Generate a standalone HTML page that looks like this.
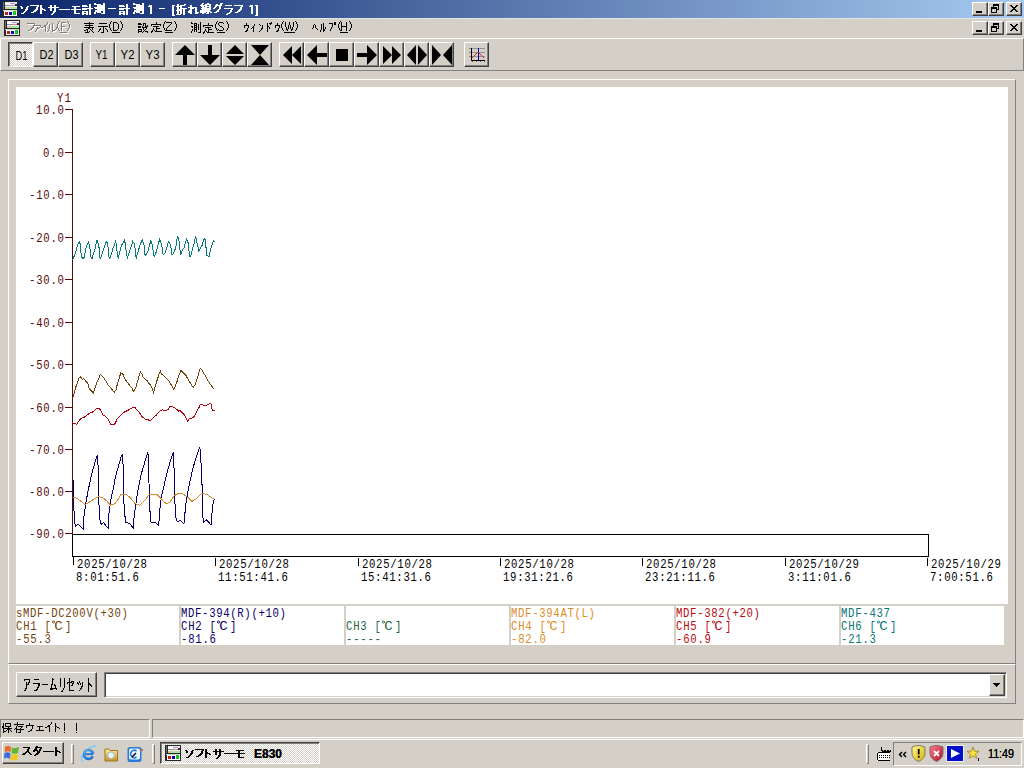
<!DOCTYPE html>
<html><head><meta charset="utf-8"><title>ソフトサーモ計測</title><style>
*{margin:0;padding:0;box-sizing:border-box}
html,body{width:1024px;height:768px;overflow:hidden;background:#d4d0c8;font-family:"Liberation Sans",sans-serif;font-size:12px;color:#000}
.a{position:absolute}
.jp{position:absolute;display:block}
.raised{position:absolute;background:#d4d0c8;border-top:1px solid #fff;border-left:1px solid #fff;border-right:1px solid #404040;border-bottom:1px solid #404040;box-shadow:inset -1px -1px 0 #808080}
.pressed{position:absolute;border-top:1px solid #404040;border-left:1px solid #404040;border-right:1px solid #fff;border-bottom:1px solid #fff;box-shadow:inset 1px 1px 0 #808080;
  background-color:#fff;background-image:repeating-conic-gradient(#d4d0c8 0 25%,#fff 0 50%);background-size:2px 2px}
.thin-raised{position:absolute;border-top:1px solid #fff;border-left:1px solid #fff;border-right:1px solid #808080;border-bottom:1px solid #808080}
.thin-sunk{position:absolute;border-top:1px solid #808080;border-left:1px solid #808080;border-right:1px solid #fff;border-bottom:1px solid #fff}
.tb{font-family:"Liberation Sans",sans-serif;font-size:12px;text-align:center;line-height:23px}
svg.a{overflow:visible}
.mono{font-family:"Liberation Mono",monospace}
</style></head>
<body>
<div class="a" style="left:0;top:0;width:1024px;height:18px;background:linear-gradient(90deg,#0a246a,#a6caf0)"></div>
<div class="a" style="left:0;top:18px;width:1024px;height:1px;background:#e4e4e8"></div>
<svg class="a" style="left:2px;top:1px" width="16" height="16" shape-rendering="crispEdges">
<rect x="0" y="0" width="16" height="16" fill="#262626"/>
<rect x="3" y="1" width="12" height="7" fill="#eef0ee"/>
<rect x="3" y="2" width="5" height="2" fill="#fff"/>
<rect x="8" y="2" width="5" height="1" fill="#a898d8"/>
<rect x="3" y="4" width="5" height="1" fill="#8c8cc8"/>
<rect x="8" y="4" width="5" height="1" fill="#d09088"/>
<rect x="3" y="6" width="5" height="2" fill="#c8d098"/>
<rect x="8" y="6" width="7" height="2" fill="#a8e8a8"/>
<rect x="13" y="3" width="2" height="2" fill="#3a1a50"/>
<rect x="1" y="1" width="1" height="7" fill="#707070"/>
<rect x="1" y="9" width="14" height="1" fill="#d8d8d8"/>
<rect x="2" y="10" width="13" height="5" fill="#fff"/>
<rect x="3" y="11" width="3" height="3" fill="#c81818"/>
<rect x="7" y="11" width="3" height="3" fill="#0808b8"/>
<rect x="11" y="10" width="3" height="4" fill="#18c818"/>
</svg>
<svg class="jp" style="left:20px;top:3px" width="85" height="12" shape-rendering="crispEdges"><title>ソフトサーモ計測</title><path fill="#fff" d="M74 0h2v1h-2zM83 0h2v1h-2zM69 1h2v1h-2zM74 1h7v1h-7zM83 1h2v1h-2zM10 2h9v1h-9zM20 2h2v1h-2zM30 2h2v1h-2zM34 2h2v1h-2zM62 2h5v1h-5zM69 2h2v1h-2zM77 2h8v1h-8zM0 3h2v1h-2zM7 3h2v1h-2zM17 3h2v1h-2zM20 3h2v1h-2zM30 3h2v1h-2zM34 3h2v1h-2zM52 3h8v1h-8zM62 3h6v1h-6zM69 3h2v1h-2zM77 3h8v1h-8zM1 4h2v1h-2zM6 4h2v1h-2zM16 4h2v1h-2zM20 4h2v1h-2zM28 4h11v1h-11zM54 4h2v1h-2zM69 4h2v1h-2zM74 4h11v1h-11zM1 5h2v1h-2zM6 5h2v1h-2zM16 5h2v1h-2zM20 5h3v1h-3zM30 5h2v1h-2zM34 5h2v1h-2zM54 5h2v1h-2zM62 5h11v1h-11zM75 5h10v1h-10zM5 6h3v1h-3zM15 6h3v1h-3zM20 6h5v1h-5zM30 6h2v1h-2zM34 6h2v1h-2zM39 6h11v1h-11zM51 6h10v1h-10zM62 6h5v1h-5zM69 6h2v1h-2zM77 6h8v1h-8zM5 7h2v1h-2zM14 7h3v1h-3zM20 7h2v1h-2zM24 7h2v1h-2zM30 7h2v1h-2zM34 7h2v1h-2zM54 7h2v1h-2zM69 7h2v1h-2zM75 7h10v1h-10zM4 8h2v1h-2zM13 8h3v1h-3zM20 8h2v1h-2zM33 8h3v1h-3zM54 8h2v1h-2zM62 8h6v1h-6zM69 8h2v1h-2zM75 8h6v1h-6zM83 8h2v1h-2zM3 9h2v1h-2zM11 9h3v1h-3zM20 9h2v1h-2zM33 9h2v1h-2zM54 9h2v1h-2zM62 9h2v1h-2zM66 9h2v1h-2zM69 9h2v1h-2zM74 9h2v1h-2zM77 9h4v1h-4zM83 9h2v1h-2zM1 10h3v1h-3zM20 10h2v1h-2zM32 10h2v1h-2zM54 10h6v1h-6zM62 10h6v1h-6zM69 10h2v1h-2zM74 10h2v1h-2zM81 10h4v1h-4zM31 11h2v1h-2zM62 11h2v1h-2zM66 11h2v1h-2zM69 11h2v1h-2z"/></svg>
<div class="a" style="left:108px;top:8px;width:8px;height:1px;background:#fff"></div>
<svg class="jp" style="left:119px;top:3px" width="33" height="12" shape-rendering="crispEdges"><title>計測1</title><path fill="#fff" d="M14 0h2v1h-2zM23 0h2v1h-2zM7 1h2v1h-2zM14 1h7v1h-7zM23 1h2v1h-2zM0 2h5v1h-5zM7 2h2v1h-2zM17 2h8v1h-8zM30 2h3v1h-3zM0 3h6v1h-6zM7 3h2v1h-2zM17 3h8v1h-8zM29 3h4v1h-4zM7 4h2v1h-2zM14 4h11v1h-11zM31 4h2v1h-2zM0 5h11v1h-11zM15 5h10v1h-10zM31 5h2v1h-2zM0 6h5v1h-5zM7 6h2v1h-2zM17 6h8v1h-8zM31 6h2v1h-2zM7 7h2v1h-2zM15 7h10v1h-10zM31 7h2v1h-2zM0 8h6v1h-6zM7 8h2v1h-2zM15 8h6v1h-6zM23 8h2v1h-2zM31 8h2v1h-2zM0 9h2v1h-2zM4 9h2v1h-2zM7 9h2v1h-2zM14 9h2v1h-2zM17 9h4v1h-4zM23 9h2v1h-2zM31 9h2v1h-2zM0 10h6v1h-6zM7 10h2v1h-2zM14 10h2v1h-2zM21 10h4v1h-4zM31 10h2v1h-2zM0 11h2v1h-2zM4 11h2v1h-2zM7 11h2v1h-2z"/></svg>
<div class="a" style="left:159px;top:8px;width:6px;height:1px;background:#fff"></div>
<svg class="jp" style="left:172px;top:3px" width="86" height="13" shape-rendering="crispEdges"><title>[折れ線グラフ 1]</title><path fill="#fff" d="M30 0h2v1h-2zM35 0h2v1h-2zM48 0h3v1h-3zM5 1h2v1h-2zM12 1h2v1h-2zM29 1h2v1h-2zM33 1h6v1h-6zM44 1h2v1h-2zM48 1h2v1h-2zM0 2h3v1h-3zM5 2h2v1h-2zM8 2h5v1h-5zM18 2h2v1h-2zM28 2h7v1h-7zM37 2h2v1h-2zM43 2h7v1h-7zM53 2h7v1h-7zM62 2h9v1h-9zM78 2h3v1h-3zM83 2h3v1h-3zM0 3h2v1h-2zM4 3h6v1h-6zM18 3h2v1h-2zM29 3h3v1h-3zM33 3h6v1h-6zM43 3h2v1h-2zM47 3h2v1h-2zM69 3h2v1h-2zM77 3h4v1h-4zM84 3h2v1h-2zM0 4h2v1h-2zM5 4h2v1h-2zM8 4h2v1h-2zM16 4h9v1h-9zM30 4h5v1h-5zM37 4h2v1h-2zM42 4h2v1h-2zM47 4h2v1h-2zM68 4h2v1h-2zM79 4h2v1h-2zM84 4h2v1h-2zM0 5h2v1h-2zM5 5h2v1h-2zM8 5h7v1h-7zM18 5h4v1h-4zM23 5h2v1h-2zM29 5h10v1h-10zM41 5h2v1h-2zM47 5h2v1h-2zM52 5h9v1h-9zM68 5h2v1h-2zM79 5h2v1h-2zM84 5h2v1h-2zM0 6h2v1h-2zM5 6h5v1h-5zM11 6h2v1h-2zM18 6h2v1h-2zM23 6h2v1h-2zM30 6h9v1h-9zM46 6h2v1h-2zM59 6h2v1h-2zM67 6h3v1h-3zM79 6h2v1h-2zM84 6h2v1h-2zM0 7h2v1h-2zM4 7h6v1h-6zM11 7h2v1h-2zM17 7h3v1h-3zM23 7h2v1h-2zM28 7h10v1h-10zM45 7h2v1h-2zM58 7h2v1h-2zM66 7h3v1h-3zM79 7h2v1h-2zM84 7h2v1h-2zM0 8h2v1h-2zM5 8h2v1h-2zM8 8h2v1h-2zM11 8h2v1h-2zM16 8h4v1h-4zM23 8h2v1h-2zM28 8h11v1h-11zM44 8h3v1h-3zM58 8h2v1h-2zM65 8h3v1h-3zM79 8h2v1h-2zM84 8h2v1h-2zM0 9h2v1h-2zM5 9h2v1h-2zM8 9h2v1h-2zM11 9h2v1h-2zM16 9h4v1h-4zM23 9h4v1h-4zM28 9h6v1h-6zM35 9h2v1h-2zM38 9h2v1h-2zM42 9h3v1h-3zM57 9h2v1h-2zM63 9h3v1h-3zM79 9h2v1h-2zM84 9h2v1h-2zM0 10h2v1h-2zM5 10h2v1h-2zM8 10h2v1h-2zM11 10h2v1h-2zM18 10h2v1h-2zM23 10h3v1h-3zM30 10h2v1h-2zM34 10h3v1h-3zM55 10h3v1h-3zM79 10h2v1h-2zM84 10h2v1h-2zM0 11h2v1h-2zM4 11h5v1h-5zM11 11h2v1h-2zM54 11h2v1h-2zM84 11h2v1h-2zM0 12h3v1h-3zM83 12h3v1h-3z"/></svg>
<div class="raised" style="left:972px;top:2px;width:16px;height:14px"></div>
<div class="raised" style="left:988px;top:2px;width:16px;height:14px"></div>
<div class="raised" style="left:1006px;top:2px;width:16px;height:14px"></div>
<svg class="a" style="left:0;top:0" width="1024" height="40" shape-rendering="crispEdges" fill="#000"><rect x="976" y="11" width="6" height="2"/><rect x="993" y="4" width="6" height="2"/><rect x="998" y="4" width="1" height="6"/><rect x="993" y="4" width="1" height="3"/><rect x="996" y="9" width="3" height="1"/><rect x="991" y="7" width="6" height="2"/><rect x="991" y="7" width="1" height="6"/><rect x="996" y="7" width="1" height="6"/><rect x="991" y="12" width="6" height="1"/><rect x="1010" y="5" width="1" height="1"/><rect x="1011" y="5" width="1" height="1"/><rect x="1016" y="5" width="1" height="1"/><rect x="1017" y="5" width="1" height="1"/><rect x="1011" y="6" width="1" height="1"/><rect x="1012" y="6" width="1" height="1"/><rect x="1015" y="6" width="1" height="1"/><rect x="1016" y="6" width="1" height="1"/><rect x="1012" y="7" width="1" height="1"/><rect x="1013" y="7" width="1" height="1"/><rect x="1014" y="7" width="1" height="1"/><rect x="1015" y="7" width="1" height="1"/><rect x="1013" y="8" width="1" height="1"/><rect x="1014" y="8" width="1" height="1"/><rect x="1012" y="9" width="1" height="1"/><rect x="1013" y="9" width="1" height="1"/><rect x="1014" y="9" width="1" height="1"/><rect x="1015" y="9" width="1" height="1"/><rect x="1011" y="10" width="1" height="1"/><rect x="1012" y="10" width="1" height="1"/><rect x="1015" y="10" width="1" height="1"/><rect x="1016" y="10" width="1" height="1"/><rect x="1010" y="11" width="1" height="1"/><rect x="1011" y="11" width="1" height="1"/><rect x="1016" y="11" width="1" height="1"/><rect x="1017" y="11" width="1" height="1"/></svg>
<svg class="a" style="left:4px;top:20px" width="16" height="16" shape-rendering="crispEdges">
<rect x="0" y="0" width="16" height="16" fill="#262626"/>
<rect x="3" y="1" width="12" height="7" fill="#eef0ee"/>
<rect x="3" y="2" width="5" height="2" fill="#fff"/>
<rect x="8" y="2" width="5" height="1" fill="#a898d8"/>
<rect x="3" y="4" width="5" height="1" fill="#8c8cc8"/>
<rect x="8" y="4" width="5" height="1" fill="#d09088"/>
<rect x="3" y="6" width="5" height="2" fill="#c8d098"/>
<rect x="8" y="6" width="7" height="2" fill="#a8e8a8"/>
<rect x="13" y="3" width="2" height="2" fill="#3a1a50"/>
<rect x="1" y="1" width="1" height="7" fill="#707070"/>
<rect x="1" y="9" width="14" height="1" fill="#d8d8d8"/>
<rect x="2" y="10" width="13" height="5" fill="#fff"/>
<rect x="3" y="11" width="3" height="3" fill="#c81818"/>
<rect x="7" y="11" width="3" height="3" fill="#0808b8"/>
<rect x="11" y="10" width="3" height="4" fill="#18c818"/>
</svg>
<svg class="jp" style="left:27px;top:22px" width="31" height="11" shape-rendering="crispEdges"><title>ファイル</title><path fill="#fff" d="M21 1h1v1h-1zM1 2h8v1h-8zM21 2h1v1h-1zM26 2h1v1h-1zM8 3h1v1h-1zM20 3h1v1h-1zM23 3h1v1h-1zM26 3h1v1h-1zM7 4h8v1h-8zM18 4h2v1h-2zM23 4h1v1h-1zM26 4h1v1h-1zM7 5h1v1h-1zM14 5h1v1h-1zM17 5h3v1h-3zM23 5h1v1h-1zM26 5h1v1h-1zM6 6h2v1h-2zM11 6h1v1h-1zM13 6h1v1h-1zM15 6h2v1h-2zM19 6h1v1h-1zM23 6h1v1h-1zM26 6h1v1h-1zM30 6h1v1h-1zM5 7h2v1h-2zM11 7h2v1h-2zM19 7h1v1h-1zM23 7h1v1h-1zM26 7h1v1h-1zM30 7h1v1h-1zM4 8h2v1h-2zM10 8h1v1h-1zM19 8h1v1h-1zM22 8h1v1h-1zM26 8h1v1h-1zM29 8h1v1h-1zM2 9h2v1h-2zM10 9h1v1h-1zM19 9h1v1h-1zM22 9h1v1h-1zM26 9h3v1h-3zM9 10h1v1h-1zM19 10h1v1h-1zM21 10h1v1h-1zM26 10h1v1h-1z"/><path fill="#808080" d="M20 0h1v1h-1zM0 1h8v1h-8zM20 1h1v1h-1zM25 1h1v1h-1zM7 2h1v1h-1zM19 2h1v1h-1zM22 2h1v1h-1zM25 2h1v1h-1zM6 3h8v1h-8zM17 3h2v1h-2zM22 3h1v1h-1zM25 3h1v1h-1zM6 4h1v1h-1zM13 4h1v1h-1zM16 4h3v1h-3zM22 4h1v1h-1zM25 4h1v1h-1zM5 5h2v1h-2zM10 5h1v1h-1zM12 5h1v1h-1zM14 5h2v1h-2zM18 5h1v1h-1zM22 5h1v1h-1zM25 5h1v1h-1zM29 5h1v1h-1zM4 6h2v1h-2zM10 6h2v1h-2zM18 6h1v1h-1zM22 6h1v1h-1zM25 6h1v1h-1zM29 6h1v1h-1zM3 7h2v1h-2zM9 7h1v1h-1zM18 7h1v1h-1zM21 7h1v1h-1zM25 7h1v1h-1zM28 7h1v1h-1zM1 8h2v1h-2zM9 8h1v1h-1zM18 8h1v1h-1zM21 8h1v1h-1zM25 8h3v1h-3zM8 9h1v1h-1zM18 9h1v1h-1zM20 9h1v1h-1zM25 9h1v1h-1z"/></svg>
<svg class="a" style="left:0;top:0" width="400" height="40" shape-rendering="crispEdges"><path fill="#fff" transform="translate(1 1)" d="M59 21h1v1h-1zM58 22h1v1h-1zM58 23h1v1h-1zM57 24h1v1h-1zM57 25h1v1h-1zM57 26h1v1h-1zM57 27h1v1h-1zM58 28h1v1h-1zM58 29h1v1h-1zM59 30h1v1h-1zM61 22h5v1h-5zM61 23h1v1h-1zM61 24h1v1h-1zM61 25h1v1h-1zM61 26h4v1h-4zM61 27h1v1h-1zM61 28h1v1h-1zM61 29h1v1h-1zM61 30h1v1h-1zM67 21h1v1h-1zM68 22h1v1h-1zM68 23h1v1h-1zM69 24h1v1h-1zM69 25h1v1h-1zM69 26h1v1h-1zM69 27h1v1h-1zM68 28h1v1h-1zM68 29h1v1h-1zM67 30h1v1h-1zM60 32h7v1h-7z"/><path fill="#808080" d="M59 21h1v1h-1zM58 22h1v1h-1zM58 23h1v1h-1zM57 24h1v1h-1zM57 25h1v1h-1zM57 26h1v1h-1zM57 27h1v1h-1zM58 28h1v1h-1zM58 29h1v1h-1zM59 30h1v1h-1zM61 22h5v1h-5zM61 23h1v1h-1zM61 24h1v1h-1zM61 25h1v1h-1zM61 26h4v1h-4zM61 27h1v1h-1zM61 28h1v1h-1zM61 29h1v1h-1zM61 30h1v1h-1zM67 21h1v1h-1zM68 22h1v1h-1zM68 23h1v1h-1zM69 24h1v1h-1zM69 25h1v1h-1zM69 26h1v1h-1zM69 27h1v1h-1zM68 28h1v1h-1zM68 29h1v1h-1zM67 30h1v1h-1zM60 32h7v1h-7z"/></svg>
<svg class="jp" style="left:84px;top:22px" width="24" height="11" shape-rendering="crispEdges"><title>表示</title><path fill="#000" d="M5 0h1v1h-1zM0 1h10v1h-10zM15 1h8v1h-8zM5 2h1v1h-1zM1 3h8v1h-8zM5 4h1v1h-1zM14 4h10v1h-10zM0 5h10v1h-10zM19 5h1v1h-1zM4 6h2v1h-2zM8 6h1v1h-1zM16 6h1v1h-1zM19 6h1v1h-1zM21 6h1v1h-1zM2 7h2v1h-2zM6 7h1v1h-1zM8 7h1v1h-1zM15 7h2v1h-2zM19 7h1v1h-1zM22 7h1v1h-1zM0 8h2v1h-2zM3 8h1v1h-1zM7 8h1v1h-1zM15 8h1v1h-1zM19 8h1v1h-1zM23 8h1v1h-1zM3 9h1v1h-1zM5 9h1v1h-1zM8 9h1v1h-1zM14 9h1v1h-1zM19 9h1v1h-1zM23 9h1v1h-1zM1 10h4v1h-4zM9 10h1v1h-1zM17 10h3v1h-3z"/></svg>
<svg class="a" style="left:0;top:0" width="400" height="40" shape-rendering="crispEdges"><path fill="#000" d="M111 21h1v1h-1zM110 22h1v1h-1zM110 23h1v1h-1zM109 24h1v1h-1zM109 25h1v1h-1zM109 26h1v1h-1zM109 27h1v1h-1zM110 28h1v1h-1zM110 29h1v1h-1zM111 30h1v1h-1zM113 22h4v1h-4zM113 23h1v1h-1zM117 23h1v1h-1zM113 24h1v1h-1zM118 24h1v1h-1zM113 25h1v1h-1zM118 25h1v1h-1zM113 26h1v1h-1zM118 26h1v1h-1zM113 27h1v1h-1zM118 27h1v1h-1zM113 28h1v1h-1zM118 28h1v1h-1zM113 29h1v1h-1zM117 29h1v1h-1zM113 30h4v1h-4zM120 21h1v1h-1zM121 22h1v1h-1zM121 23h1v1h-1zM122 24h1v1h-1zM122 25h1v1h-1zM122 26h1v1h-1zM122 27h1v1h-1zM121 28h1v1h-1zM121 29h1v1h-1zM120 30h1v1h-1zM112 32h8v1h-8z"/></svg>
<svg class="jp" style="left:138px;top:22px" width="24" height="11" shape-rendering="crispEdges"><title>設定</title><path fill="#000" d="M18 0h1v1h-1zM0 1h3v1h-3zM5 1h3v1h-3zM18 1h1v1h-1zM0 2h4v1h-4zM5 2h1v1h-1zM7 2h1v1h-1zM13 2h10v1h-10zM5 3h1v1h-1zM7 3h1v1h-1zM9 3h1v1h-1zM13 3h1v1h-1zM22 3h1v1h-1zM0 4h3v1h-3zM4 4h1v1h-1zM7 4h3v1h-3zM15 4h6v1h-6zM0 5h3v1h-3zM4 5h5v1h-5zM18 5h1v1h-1zM5 6h1v1h-1zM8 6h1v1h-1zM15 6h1v1h-1zM18 6h4v1h-4zM0 7h4v1h-4zM5 7h1v1h-1zM7 7h1v1h-1zM15 7h1v1h-1zM18 7h1v1h-1zM0 8h1v1h-1zM3 8h1v1h-1zM6 8h1v1h-1zM14 8h1v1h-1zM16 8h1v1h-1zM18 8h1v1h-1zM0 9h4v1h-4zM5 9h1v1h-1zM7 9h3v1h-3zM13 9h2v1h-2zM17 9h7v1h-7zM0 10h1v1h-1zM4 10h1v1h-1zM9 10h1v1h-1zM13 10h1v1h-1z"/></svg>
<svg class="a" style="left:0;top:0" width="400" height="40" shape-rendering="crispEdges"><path fill="#000" d="M165 21h1v1h-1zM164 22h1v1h-1zM164 23h1v1h-1zM163 24h1v1h-1zM163 25h1v1h-1zM163 26h1v1h-1zM163 27h1v1h-1zM164 28h1v1h-1zM164 29h1v1h-1zM165 30h1v1h-1zM166 22h6v1h-6zM171 23h1v1h-1zM170 24h1v1h-1zM169 25h1v1h-1zM168 26h1v1h-1zM167 27h1v1h-1zM166 28h1v1h-1zM166 29h1v1h-1zM166 30h6v1h-6zM174 21h1v1h-1zM175 22h1v1h-1zM175 23h1v1h-1zM176 24h1v1h-1zM176 25h1v1h-1zM176 26h1v1h-1zM176 27h1v1h-1zM175 28h1v1h-1zM175 29h1v1h-1zM174 30h1v1h-1zM165 32h8v1h-8z"/></svg>
<svg class="jp" style="left:191px;top:22px" width="23" height="12" shape-rendering="crispEdges"><title>測定</title><path fill="#000" d="M0 0h1v1h-1zM9 0h1v1h-1zM0 1h2v1h-2zM3 1h3v1h-3zM9 1h1v1h-1zM17 1h1v1h-1zM3 2h1v1h-1zM5 2h1v1h-1zM7 2h1v1h-1zM9 2h1v1h-1zM17 2h1v1h-1zM3 3h3v1h-3zM7 3h1v1h-1zM9 3h1v1h-1zM12 3h10v1h-10zM0 4h2v1h-2zM3 4h1v1h-1zM5 4h1v1h-1zM7 4h1v1h-1zM9 4h1v1h-1zM12 4h1v1h-1zM21 4h1v1h-1zM1 5h1v1h-1zM3 5h3v1h-3zM7 5h1v1h-1zM9 5h1v1h-1zM14 5h6v1h-6zM3 6h1v1h-1zM5 6h1v1h-1zM7 6h1v1h-1zM9 6h1v1h-1zM17 6h1v1h-1zM1 7h1v1h-1zM3 7h3v1h-3zM7 7h1v1h-1zM9 7h1v1h-1zM14 7h1v1h-1zM17 7h4v1h-4zM1 8h1v1h-1zM3 8h1v1h-1zM5 8h1v1h-1zM9 8h1v1h-1zM14 8h1v1h-1zM17 8h1v1h-1zM0 9h1v1h-1zM3 9h1v1h-1zM5 9h1v1h-1zM9 9h1v1h-1zM13 9h1v1h-1zM15 9h1v1h-1zM17 9h1v1h-1zM0 10h1v1h-1zM7 10h3v1h-3zM12 10h2v1h-2zM16 10h7v1h-7zM12 11h1v1h-1z"/></svg>
<svg class="a" style="left:0;top:0" width="400" height="40" shape-rendering="crispEdges"><path fill="#000" d="M217 21h1v1h-1zM216 22h1v1h-1zM216 23h1v1h-1zM215 24h1v1h-1zM215 25h1v1h-1zM215 26h1v1h-1zM215 27h1v1h-1zM216 28h1v1h-1zM216 29h1v1h-1zM217 30h1v1h-1zM219 22h4v1h-4zM218 23h1v1h-1zM223 23h1v1h-1zM218 24h1v1h-1zM219 25h1v1h-1zM220 26h2v1h-2zM222 27h1v1h-1zM223 28h1v1h-1zM218 29h1v1h-1zM223 29h1v1h-1zM219 30h4v1h-4zM226 21h1v1h-1zM227 22h1v1h-1zM227 23h1v1h-1zM228 24h1v1h-1zM228 25h1v1h-1zM228 26h1v1h-1zM228 27h1v1h-1zM227 28h1v1h-1zM227 29h1v1h-1zM226 30h1v1h-1zM217 32h8v1h-8z"/></svg>
<svg class="jp" style="left:244px;top:22px" width="36" height="10" shape-rendering="crispEdges"><title>ｳｨﾝﾄﾞｳ</title><path fill="#000" d="M27 0h1v1h-1zM2 1h1v1h-1zM23 1h1v1h-1zM25 1h3v1h-3zM33 1h1v1h-1zM2 2h1v1h-1zM10 2h1v1h-1zM15 2h1v1h-1zM23 2h1v1h-1zM26 2h1v1h-1zM33 2h1v1h-1zM0 3h5v1h-5zM10 3h1v1h-1zM16 3h1v1h-1zM18 3h1v1h-1zM23 3h1v1h-1zM31 3h5v1h-5zM0 4h1v1h-1zM4 4h1v1h-1zM9 4h1v1h-1zM18 4h1v1h-1zM23 4h2v1h-2zM31 4h1v1h-1zM35 4h1v1h-1zM0 5h1v1h-1zM4 5h1v1h-1zM8 5h2v1h-2zM18 5h1v1h-1zM23 5h1v1h-1zM25 5h1v1h-1zM31 5h1v1h-1zM35 5h1v1h-1zM3 6h1v1h-1zM7 6h1v1h-1zM9 6h1v1h-1zM17 6h2v1h-2zM23 6h1v1h-1zM25 6h1v1h-1zM34 6h1v1h-1zM3 7h1v1h-1zM9 7h1v1h-1zM17 7h1v1h-1zM23 7h1v1h-1zM34 7h1v1h-1zM2 8h2v1h-2zM9 8h1v1h-1zM16 8h1v1h-1zM23 8h1v1h-1zM33 8h2v1h-2zM1 9h2v1h-2zM9 9h1v1h-1zM15 9h1v1h-1zM23 9h1v1h-1zM32 9h2v1h-2z"/></svg>
<svg class="a" style="left:0;top:0" width="400" height="40" shape-rendering="crispEdges"><path fill="#000" d="M283 21h1v1h-1zM282 22h1v1h-1zM282 23h1v1h-1zM281 24h1v1h-1zM281 25h1v1h-1zM281 26h1v1h-1zM281 27h1v1h-1zM282 28h1v1h-1zM282 29h1v1h-1zM283 30h1v1h-1zM285 22h1v1h-1zM289 22h1v1h-1zM293 22h1v1h-1zM285 23h1v1h-1zM289 23h1v1h-1zM293 23h1v1h-1zM285 24h1v1h-1zM289 24h1v1h-1zM293 24h1v1h-1zM285 25h1v1h-1zM288 25h1v1h-1zM290 25h1v1h-1zM293 25h1v1h-1zM285 26h1v1h-1zM288 26h1v1h-1zM290 26h1v1h-1zM293 26h1v1h-1zM286 27h1v1h-1zM288 27h1v1h-1zM290 27h1v1h-1zM292 27h1v1h-1zM286 28h1v1h-1zM288 28h1v1h-1zM290 28h1v1h-1zM292 28h1v1h-1zM286 29h2v1h-2zM291 29h2v1h-2zM287 30h1v1h-1zM291 30h1v1h-1zM295 21h1v1h-1zM296 22h1v1h-1zM296 23h1v1h-1zM297 24h1v1h-1zM297 25h1v1h-1zM297 26h1v1h-1zM297 27h1v1h-1zM296 28h1v1h-1zM296 29h1v1h-1zM295 30h1v1h-1zM284 32h11v1h-11z"/></svg>
<svg class="jp" style="left:312px;top:22px" width="24" height="10" shape-rendering="crispEdges"><title>ﾍﾙﾌﾟ</title><path fill="#000" d="M22 0h2v1h-2zM11 1h1v1h-1zM17 1h4v1h-4zM22 1h2v1h-2zM2 2h1v1h-1zM9 2h1v1h-1zM11 2h1v1h-1zM20 2h1v1h-1zM22 2h2v1h-2zM1 3h1v1h-1zM3 3h1v1h-1zM9 3h1v1h-1zM11 3h1v1h-1zM20 3h1v1h-1zM1 4h1v1h-1zM3 4h1v1h-1zM9 4h1v1h-1zM11 4h1v1h-1zM20 4h1v1h-1zM1 5h1v1h-1zM3 5h1v1h-1zM9 5h1v1h-1zM11 5h1v1h-1zM13 5h1v1h-1zM19 5h1v1h-1zM0 6h1v1h-1zM4 6h1v1h-1zM9 6h1v1h-1zM11 6h1v1h-1zM13 6h1v1h-1zM19 6h1v1h-1zM5 7h1v1h-1zM9 7h1v1h-1zM11 7h2v1h-2zM18 7h1v1h-1zM8 8h1v1h-1zM11 8h2v1h-2zM18 8h1v1h-1zM8 9h1v1h-1zM11 9h1v1h-1z"/></svg>
<svg class="a" style="left:0;top:0" width="400" height="40" shape-rendering="crispEdges"><path fill="#000" d="M340 21h1v1h-1zM339 22h1v1h-1zM339 23h1v1h-1zM338 24h1v1h-1zM338 25h1v1h-1zM338 26h1v1h-1zM338 27h1v1h-1zM339 28h1v1h-1zM339 29h1v1h-1zM340 30h1v1h-1zM341 22h1v1h-1zM346 22h1v1h-1zM341 23h1v1h-1zM346 23h1v1h-1zM341 24h1v1h-1zM346 24h1v1h-1zM341 25h1v1h-1zM346 25h1v1h-1zM341 26h6v1h-6zM341 27h1v1h-1zM346 27h1v1h-1zM341 28h1v1h-1zM346 28h1v1h-1zM341 29h1v1h-1zM346 29h1v1h-1zM341 30h1v1h-1zM346 30h1v1h-1zM349 21h1v1h-1zM350 22h1v1h-1zM350 23h1v1h-1zM351 24h1v1h-1zM351 25h1v1h-1zM351 26h1v1h-1zM351 27h1v1h-1zM350 28h1v1h-1zM350 29h1v1h-1zM349 30h1v1h-1zM340 32h8v1h-8z"/></svg>
<div class="raised" style="left:972px;top:21px;width:16px;height:14px"></div>
<div class="raised" style="left:988px;top:21px;width:16px;height:14px"></div>
<div class="raised" style="left:1006px;top:21px;width:16px;height:14px"></div>
<svg class="a" style="left:0;top:0" width="1024" height="40" shape-rendering="crispEdges" fill="#000"><rect x="976" y="30" width="6" height="2"/><rect x="993" y="23" width="6" height="2"/><rect x="998" y="23" width="1" height="6"/><rect x="993" y="23" width="1" height="3"/><rect x="996" y="28" width="3" height="1"/><rect x="991" y="26" width="6" height="2"/><rect x="991" y="26" width="1" height="6"/><rect x="996" y="26" width="1" height="6"/><rect x="991" y="31" width="6" height="1"/><rect x="1010" y="24" width="1" height="1"/><rect x="1011" y="24" width="1" height="1"/><rect x="1016" y="24" width="1" height="1"/><rect x="1017" y="24" width="1" height="1"/><rect x="1011" y="25" width="1" height="1"/><rect x="1012" y="25" width="1" height="1"/><rect x="1015" y="25" width="1" height="1"/><rect x="1016" y="25" width="1" height="1"/><rect x="1012" y="26" width="1" height="1"/><rect x="1013" y="26" width="1" height="1"/><rect x="1014" y="26" width="1" height="1"/><rect x="1015" y="26" width="1" height="1"/><rect x="1013" y="27" width="1" height="1"/><rect x="1014" y="27" width="1" height="1"/><rect x="1012" y="28" width="1" height="1"/><rect x="1013" y="28" width="1" height="1"/><rect x="1014" y="28" width="1" height="1"/><rect x="1015" y="28" width="1" height="1"/><rect x="1011" y="29" width="1" height="1"/><rect x="1012" y="29" width="1" height="1"/><rect x="1015" y="29" width="1" height="1"/><rect x="1016" y="29" width="1" height="1"/><rect x="1010" y="30" width="1" height="1"/><rect x="1011" y="30" width="1" height="1"/><rect x="1016" y="30" width="1" height="1"/><rect x="1017" y="30" width="1" height="1"/></svg>
<div class="thin-raised" style="left:0px;top:38px;width:1024px;height:33px;"></div>
<div class="pressed" style="left:8px;top:42px;width:25px;height:25px"><svg class="a" style="left:0px;top:0px" width="25" height="25"><text x="12.5" y="17" text-anchor="middle" font-size="12.5" textLength="12" lengthAdjust="spacingAndGlyphs" fill="#000">D1</text></svg></div>
<div class="raised" style="left:33px;top:42px;width:25px;height:25px"><svg class="a" style="left:-1px;top:-1px" width="25" height="25"><text x="13.5" y="17" text-anchor="middle" font-size="12.5" textLength="14" lengthAdjust="spacingAndGlyphs" fill="#000">D2</text></svg></div>
<div class="raised" style="left:58px;top:42px;width:25px;height:25px"><svg class="a" style="left:-1px;top:-1px" width="25" height="25"><text x="13.5" y="17" text-anchor="middle" font-size="12.5" textLength="14" lengthAdjust="spacingAndGlyphs" fill="#000">D3</text></svg></div>
<div class="raised" style="left:90px;top:42px;width:25px;height:25px"><svg class="a" style="left:-1px;top:-1px" width="25" height="25"><text x="11.5" y="17" text-anchor="middle" font-size="12.5" textLength="12" lengthAdjust="spacingAndGlyphs" fill="#000">Y1</text></svg></div>
<div class="raised" style="left:115px;top:42px;width:25px;height:25px"><svg class="a" style="left:-1px;top:-1px" width="25" height="25"><text x="12.5" y="17" text-anchor="middle" font-size="12.5" textLength="14" lengthAdjust="spacingAndGlyphs" fill="#000">Y2</text></svg></div>
<div class="raised" style="left:140px;top:42px;width:25px;height:25px"><svg class="a" style="left:-1px;top:-1px" width="25" height="25"><text x="12.5" y="17" text-anchor="middle" font-size="12.5" textLength="14" lengthAdjust="spacingAndGlyphs" fill="#000">Y3</text></svg></div>
<div class="raised" style="left:172px;top:42px;width:25px;height:25px"></div>
<div class="raised" style="left:197px;top:42px;width:25px;height:25px"></div>
<div class="raised" style="left:222px;top:42px;width:25px;height:25px"></div>
<div class="raised" style="left:247px;top:42px;width:25px;height:25px"></div>
<div class="raised" style="left:279px;top:42px;width:25px;height:25px"></div>
<div class="raised" style="left:304px;top:42px;width:25px;height:25px"></div>
<div class="raised" style="left:329px;top:42px;width:25px;height:25px"></div>
<div class="raised" style="left:354px;top:42px;width:25px;height:25px"></div>
<div class="raised" style="left:379px;top:42px;width:25px;height:25px"></div>
<div class="raised" style="left:404px;top:42px;width:25px;height:25px"></div>
<div class="raised" style="left:429px;top:42px;width:25px;height:25px"></div>
<div class="raised" style="left:464px;top:42px;width:25px;height:25px"></div>
<svg class="a" style="left:0;top:0" width="1024" height="80">
<path fill="#000" d="M175 55L185 45L195 55Z M183 55h4v10h-4z
M208 45h4v10h-4z M200 55L220 55L210 65Z
M226 54L235 45L244 54Z M226 56L244 56L235 65Z
M251 45L269 45L260 55L269 65L251 65L260 55Z
M283 55L292 46V64Z M292 55L301 46V64Z
M307 55L317 45V65Z M317 53h10v4h-10z
M336 49h12v12h-12z
M357 53h10v4h-10z M367 45V65L377 55Z
M383 46V64L392 55Z M392 46V64L401 55Z
M407 55L416 45V65Z M418 45V65L427 55Z
M432 45V65L441 55Z M443 55L452 45V65Z"/>
<g shape-rendering="crispEdges">
<rect x="469" y="48" width="16" height="1" fill="#909090"/>
<rect x="469" y="52" width="16" height="1" fill="#909090"/>
<rect x="469" y="56" width="16" height="1" fill="#909090"/>
<rect x="471" y="48" width="1" height="13" fill="#000"/>
<rect x="471" y="60" width="14" height="1" fill="#000"/>
<rect x="478" y="48" width="1" height="12" fill="#0000a0"/>
<rect x="472" y="61" width="1" height="1" fill="#606060"/><rect x="476" y="61" width="1" height="1" fill="#606060"/><rect x="480" y="61" width="1" height="1" fill="#606060"/><rect x="484" y="61" width="1" height="1" fill="#606060"/>
</g>
<polyline points="472,58 478,52 484,58" fill="none" stroke="#c03030" stroke-width="1"/>
</svg>
<div class="thin-raised" style="left:8px;top:79px;width:1008px;height:585px;"></div>
<div class="a" style="left:16px;top:87px;width:992px;height:517px;background:#fff"></div>
<svg class="a" style="left:0;top:0" width="1024" height="600">
<g shape-rendering="crispEdges">
<rect x="72" y="109" width="1" height="425" fill="#5a0a0a"/>
<rect x="65" y="109" width="7" height="1" fill="#5a0a0a"/>
<rect x="65" y="152" width="7" height="1" fill="#5a0a0a"/>
<rect x="65" y="194" width="7" height="1" fill="#5a0a0a"/>
<rect x="65" y="237" width="7" height="1" fill="#5a0a0a"/>
<rect x="65" y="279" width="7" height="1" fill="#5a0a0a"/>
<rect x="65" y="322" width="7" height="1" fill="#5a0a0a"/>
<rect x="65" y="364" width="7" height="1" fill="#5a0a0a"/>
<rect x="65" y="407" width="7" height="1" fill="#5a0a0a"/>
<rect x="65" y="449" width="7" height="1" fill="#5a0a0a"/>
<rect x="65" y="491" width="7" height="1" fill="#5a0a0a"/>
<rect x="65" y="533" width="7" height="1" fill="#5a0a0a"/>
<rect x="72.5" y="534.5" width="856" height="22" fill="none" stroke="#000" stroke-width="1"/>
<rect x="73" y="557" width="1" height="8" fill="#000"/>
<rect x="215" y="558" width="1" height="8" fill="#000"/>
<rect x="358" y="558" width="1" height="8" fill="#000"/>
<rect x="500" y="558" width="1" height="8" fill="#000"/>
<rect x="642" y="558" width="1" height="8" fill="#000"/>
<rect x="785" y="558" width="1" height="8" fill="#000"/>
<rect x="927" y="558" width="1" height="8" fill="#000"/>
</g>
<g class="mono" font-size="13" fill="#5a0a0a">
<text transform="scale(0.82 1)" x="78.05" y="114" textLength="34.15" lengthAdjust="spacing" text-anchor="end">10.0</text>
<text transform="scale(0.82 1)" x="78.05" y="157" textLength="25.61" lengthAdjust="spacing" text-anchor="end">0.0</text>
<text transform="scale(0.82 1)" x="78.05" y="199" textLength="42.68" lengthAdjust="spacing" text-anchor="end">-10.0</text>
<text transform="scale(0.82 1)" x="78.05" y="242" textLength="42.68" lengthAdjust="spacing" text-anchor="end">-20.0</text>
<text transform="scale(0.82 1)" x="78.05" y="284" textLength="42.68" lengthAdjust="spacing" text-anchor="end">-30.0</text>
<text transform="scale(0.82 1)" x="78.05" y="327" textLength="42.68" lengthAdjust="spacing" text-anchor="end">-40.0</text>
<text transform="scale(0.82 1)" x="78.05" y="369" textLength="42.68" lengthAdjust="spacing" text-anchor="end">-50.0</text>
<text transform="scale(0.82 1)" x="78.05" y="412" textLength="42.68" lengthAdjust="spacing" text-anchor="end">-60.0</text>
<text transform="scale(0.82 1)" x="78.05" y="454" textLength="42.68" lengthAdjust="spacing" text-anchor="end">-70.0</text>
<text transform="scale(0.82 1)" x="78.05" y="496" textLength="42.68" lengthAdjust="spacing" text-anchor="end">-80.0</text>
<text transform="scale(0.82 1)" x="78.05" y="538" textLength="42.68" lengthAdjust="spacing" text-anchor="end">-90.0</text>
<text transform="scale(0.82 1)" x="69.51" y="102" textLength="17.07" lengthAdjust="spacing">Y1</text>
</g>
<g class="mono" font-size="13" fill="#000">
<text transform="scale(0.82 1)" x="93.90" y="568" textLength="85.37" lengthAdjust="spacing">2025/10/28</text><text transform="scale(0.82 1)" x="92.68" y="581" textLength="76.83" lengthAdjust="spacing">8:01:51.6</text>
<text transform="scale(0.82 1)" x="267.07" y="568" textLength="85.37" lengthAdjust="spacing">2025/10/28</text><text transform="scale(0.82 1)" x="265.85" y="581" textLength="85.37" lengthAdjust="spacing">11:51:41.6</text>
<text transform="scale(0.82 1)" x="441.46" y="568" textLength="85.37" lengthAdjust="spacing">2025/10/28</text><text transform="scale(0.82 1)" x="440.24" y="581" textLength="85.37" lengthAdjust="spacing">15:41:31.6</text>
<text transform="scale(0.82 1)" x="614.63" y="568" textLength="85.37" lengthAdjust="spacing">2025/10/28</text><text transform="scale(0.82 1)" x="613.41" y="581" textLength="85.37" lengthAdjust="spacing">19:31:21.6</text>
<text transform="scale(0.82 1)" x="787.80" y="568" textLength="85.37" lengthAdjust="spacing">2025/10/28</text><text transform="scale(0.82 1)" x="786.59" y="581" textLength="85.37" lengthAdjust="spacing">23:21:11.6</text>
<text transform="scale(0.82 1)" x="962.20" y="568" textLength="85.37" lengthAdjust="spacing">2025/10/29</text><text transform="scale(0.82 1)" x="960.98" y="581" textLength="76.83" lengthAdjust="spacing">3:11:01.6</text>
<text transform="scale(0.82 1)" x="1135.37" y="568" textLength="85.37" lengthAdjust="spacing">2025/10/29</text><text transform="scale(0.82 1)" x="1134.15" y="581" textLength="76.83" lengthAdjust="spacing">7:00:51.6</text>
</g>
<polyline points="72.9,397.0 74.4,392.5 75.8,387.2 77.3,382.8 78.6,378.8 80.4,376.4 82.4,379.7 83.7,378.6 85.3,380.6 87.9,383.7 89.3,388.6 91.5,390.8 93.5,393.0 95.5,386.8 96.8,382.8 98.5,379.3 100.3,374.6 103.4,377.1 105.6,380.6 107.8,384.6 109.6,386.8 111.1,388.3 114.2,392.3 116.0,389.7 117.5,383.5 119.1,378.6 120.8,372.8 123.0,374.4 124.8,379.0 127.0,381.7 129.2,384.8 131.9,387.9 133.4,391.4 135.4,388.8 136.8,383.9 138.5,378.2 140.3,371.7 142.5,375.1 143.4,377.7 145.6,379.5 147.1,380.6 148.9,383.2 151.1,385.9 152.4,389.0 153.5,392.1 154.6,389.0 156.2,382.8 157.7,378.4 159.3,373.5 160.4,371.3 161.7,374.4 163.0,374.8 164.8,377.0 168.8,381.0 171.0,384.6 173.2,388.1 173.9,389.7 175.0,386.8 176.7,382.4 179.0,375.3 180.9,370.4 184.0,373.7 186.2,375.9 188.4,379.9 190.6,383.5 191.9,386.1 193.3,387.0 195.0,384.8 196.8,379.5 198.6,374.2 199.5,370.2 200.4,368.4 202.1,370.4 204.3,374.2 206.1,376.8 207.4,379.9 210.1,383.9 213.2,388.3 213.5,389.5" fill="none" stroke="#70400c" stroke-width="1" shape-rendering="crispEdges"/>
<polyline points="73.5,480.2 73.5,510.3 74.5,512.0 74.5,521.5 75.6,526.0 78.4,524.3 81.2,527.1 83.2,529.3 83.4,520.4 84.8,510.3 86.5,499.1 88.5,489.0 91.0,477.4 93.5,467.3 96.0,458.9 97.4,455.2 97.5,464.5 98.5,465.3 98.5,504.0 99.5,505.8 99.5,517.6 101.1,524.3 103.6,522.6 106.4,526.5 108.2,528.2 108.5,517.0 109.6,508.6 111.3,496.8 113.3,489.0 115.5,476.8 118.0,467.8 120.8,457.8 122.2,454.4 122.5,463.9 123.5,464.5 123.5,503.6 124.5,504.1 124.5,516.4 125.5,517.0 125.5,522.6 129.5,523.2 133.4,528.2 133.7,520.9 135.7,504.7 137.6,492.4 139.6,482.4 141.3,474.0 143.7,465.6 145.4,460.0 147.6,453.3 148.5,454.4 149.5,511.4 150.5,512.0 150.5,519.8 151.2,522.6 155.4,522.6 158.8,525.4 159.4,513.1 161.3,497.4 163.3,489.0 165.5,478.5 168.9,466.2 171.1,458.3 173.4,452.4 173.5,467.8 174.5,468.4 174.5,503.6 175.5,504.1 175.5,516.4 177.3,521.5 180.2,520.4 181.9,522.0 183.9,524.0 184.7,516.4 185.6,505.2 187.8,492.4 189.8,482.4 192.8,468.4 195.4,460.0 197.9,452.2 199.3,447.7 200.5,450.5 200.5,462.2 201.5,463.4 201.5,484.1 202.5,484.6 202.5,517.6 203.5,518.1 203.8,522.0 206.6,519.8 208.5,522.0 211.0,525.1 211.6,517.0 212.7,506.4 213.6,500.2 214.4,499.4" fill="none" stroke="#08006a" stroke-width="1" shape-rendering="crispEdges"/>
<polyline points="72.8,497.1 77.3,498.5 85.1,504.7 91.3,500.8 98.0,496.8 102.5,497.4 106.6,500.8 110.5,505.2 115.0,503.6 118.9,498.5 120.8,494.3 126.2,494.3 130.6,498.0 135.1,503.6 139.6,505.2 141.8,503.0 145.9,499.1 149.3,494.6 156.6,494.3 161.0,498.5 164.4,502.4 166.6,503.6 170.0,501.9 174.2,495.7 178.4,493.5 181.9,493.2 187.0,496.8 192.0,501.3 196.5,498.5 202.1,493.2 206.6,494.3 210.5,496.8 214.4,499.4" fill="none" stroke="#d88a30" stroke-width="1" shape-rendering="crispEdges"/>
<polyline points="72.9,423.7 74.7,423.2 76.4,424.5 78.6,421.5 80.8,418.4 83.9,417.5 86.6,415.3 89.7,413.3 92.4,412.2 95.9,409.1 99.0,408.4 100.8,410.4 103.0,414.8 105.6,416.6 108.3,419.2 110.7,424.1 112.4,425.0 114.6,424.3 117.3,418.8 120.8,415.3 123.5,412.6 128.4,410.0 132.8,407.7 135.0,407.3 136.3,409.1 139.0,412.2 142.1,416.6 144.4,418.3 145.8,419.9 148.4,419.9 150.2,421.0 152.8,418.1 155.9,415.5 160.4,410.6 162.6,409.7 165.2,411.0 168.3,409.3 169.7,406.6 172.3,406.8 175.0,408.0 178.5,411.0 180.3,410.6 184.0,414.6 186.2,418.1 187.5,421.2 189.3,418.3 191.9,418.1 194.2,416.4 196.4,411.9 198.6,408.4 200.4,404.4 203.0,405.1 206.5,405.3 210.1,403.3 211.4,404.6 211.9,408.4 212.7,410.2 214.7,410.4" fill="none" stroke="#b0000a" stroke-width="1" shape-rendering="crispEdges"/>
<polyline points="72.8,259.8 75.5,252.4 77.5,245.7 79.2,241.4 80.4,244.5 80.6,250.4 81.6,257.0 83.1,258.4 84.5,257.4 85.3,250.8 86.8,245.7 88.4,242.4 89.6,245.7 90.4,251.2 91.1,257.4 92.1,258.4 93.3,254.3 95.0,248.8 96.0,244.2 97.0,240.4 98.6,244.5 99.3,249.6 99.7,257.0 100.5,258.4 102.1,253.9 103.6,248.8 105.2,244.5 106.4,241.4 107.5,243.4 108.3,249.2 108.9,256.7 109.7,258.2 110.4,257.4 112.7,249.2 114.3,244.9 115.5,241.4 116.4,244.5 116.8,249.2 117.8,256.2 118.4,257.4 119.4,253.1 121.3,245.7 122.9,243.3 124.3,240.4 125.4,243.7 126.0,249.6 126.6,255.4 127.4,257.4 129.3,252.3 131.3,246.1 132.7,241.4 134.4,243.7 135.2,249.6 135.8,256.2 136.4,257.4 138.1,251.5 140.1,244.9 142.2,239.4 143.6,243.7 144.4,246.5 144.8,254.3 145.9,255.4 147.9,251.1 149.4,245.6 150.9,240.5 152.3,244.5 152.7,248.8 153.7,253.4 154.1,257.0 155.8,253.4 157.4,247.2 158.5,242.9 159.7,239.4 161.3,243.3 162.1,247.6 162.6,253.4 163.6,254.4 165.2,252.7 166.6,248.4 167.5,244.5 168.9,241.3 170.3,245.2 171.2,248.8 171.6,254.2 173.0,254.4 175.0,249.5 176.1,245.6 176.5,241.7 177.5,236.3 178.5,237.4 179.3,242.9 179.6,248.0 180.6,253.4 181.0,254.4 182.4,249.5 184.3,248.0 184.9,244.1 186.5,239.4 187.7,241.7 188.5,243.7 188.7,250.3 189.7,251.9 189.9,257.3 191.4,253.8 192.4,248.8 193.6,245.6 194.7,240.5 195.5,237.4 196.5,239.0 196.9,242.5 197.9,246.4 198.8,251.1 200.4,248.4 202.4,244.8 203.5,240.5 204.5,238.6 205.5,239.8 205.9,247.2 206.5,248.0 207.0,255.4 208.0,255.8 209.0,257.3 209.8,252.7 211.0,248.4 212.1,244.8 212.9,242.1 213.7,240.4 214.7,241.7" fill="none" stroke="#0a7878" stroke-width="1" shape-rendering="crispEdges"/>
</svg>
<div class="a" style="left:16px;top:606px;width:163px;height:39px;background:#fff"></div>
<svg class="a mono" style="left:16px;top:606px" width="163" height="39" font-size="13" fill="#74440c"><text transform="scale(0.82 1)" x="0.00" y="11" textLength="136.59" lengthAdjust="spacing">sMDF-DC200V(+30)</text><text transform="scale(0.82 1)" x="0.00" y="24" textLength="42.68" lengthAdjust="spacing">CH1 [</text><circle cx="37.5" cy="16" r="1.1" fill="none" stroke="#74440c" stroke-width="0.9"/><text transform="scale(0.82 1)" x="46.8" y="24" textLength="10.4" lengthAdjust="spacingAndGlyphs">C</text><text transform="scale(0.82 1)" x="59.76" y="24" textLength="8.54" lengthAdjust="spacing">]</text><text transform="scale(0.82 1)" x="0.00" y="37" textLength="42.68" lengthAdjust="spacing">-55.3</text></svg>
<div class="a" style="left:181px;top:606px;width:163px;height:39px;background:#fff"></div>
<svg class="a mono" style="left:181px;top:606px" width="163" height="39" font-size="13" fill="#08006a"><text transform="scale(0.82 1)" x="0.00" y="11" textLength="128.05" lengthAdjust="spacing">MDF-394(R)(+10)</text><text transform="scale(0.82 1)" x="0.00" y="24" textLength="42.68" lengthAdjust="spacing">CH2 [</text><circle cx="37.5" cy="16" r="1.1" fill="none" stroke="#08006a" stroke-width="0.9"/><text transform="scale(0.82 1)" x="46.8" y="24" textLength="10.4" lengthAdjust="spacingAndGlyphs">C</text><text transform="scale(0.82 1)" x="59.76" y="24" textLength="8.54" lengthAdjust="spacing">]</text><text transform="scale(0.82 1)" x="0.00" y="37" textLength="42.68" lengthAdjust="spacing">-81.6</text></svg>
<div class="a" style="left:346px;top:606px;width:163px;height:39px;background:#fff"></div>
<svg class="a mono" style="left:346px;top:606px" width="163" height="39" font-size="13" fill="#1e6440"><text transform="scale(0.82 1)" x="0.00" y="24" textLength="42.68" lengthAdjust="spacing">CH3 [</text><circle cx="37.5" cy="16" r="1.1" fill="none" stroke="#1e6440" stroke-width="0.9"/><text transform="scale(0.82 1)" x="46.8" y="24" textLength="10.4" lengthAdjust="spacingAndGlyphs">C</text><text transform="scale(0.82 1)" x="59.76" y="24" textLength="8.54" lengthAdjust="spacing">]</text><text transform="scale(0.82 1)" x="0.00" y="37" textLength="42.68" lengthAdjust="spacing">-----</text></svg>
<div class="a" style="left:511px;top:606px;width:163px;height:39px;background:#fff"></div>
<svg class="a mono" style="left:511px;top:606px" width="163" height="39" font-size="13" fill="#dc8c2c"><text transform="scale(0.82 1)" x="0.00" y="11" textLength="102.44" lengthAdjust="spacing">MDF-394AT(L)</text><text transform="scale(0.82 1)" x="0.00" y="24" textLength="42.68" lengthAdjust="spacing">CH4 [</text><circle cx="37.5" cy="16" r="1.1" fill="none" stroke="#dc8c2c" stroke-width="0.9"/><text transform="scale(0.82 1)" x="46.8" y="24" textLength="10.4" lengthAdjust="spacingAndGlyphs">C</text><text transform="scale(0.82 1)" x="59.76" y="24" textLength="8.54" lengthAdjust="spacing">]</text><text transform="scale(0.82 1)" x="0.00" y="37" textLength="42.68" lengthAdjust="spacing">-82.0</text></svg>
<div class="a" style="left:676px;top:606px;width:163px;height:39px;background:#fff"></div>
<svg class="a mono" style="left:676px;top:606px" width="163" height="39" font-size="13" fill="#b80810"><text transform="scale(0.82 1)" x="0.00" y="11" textLength="102.44" lengthAdjust="spacing">MDF-382(+20)</text><text transform="scale(0.82 1)" x="0.00" y="24" textLength="42.68" lengthAdjust="spacing">CH5 [</text><circle cx="37.5" cy="16" r="1.1" fill="none" stroke="#b80810" stroke-width="0.9"/><text transform="scale(0.82 1)" x="46.8" y="24" textLength="10.4" lengthAdjust="spacingAndGlyphs">C</text><text transform="scale(0.82 1)" x="59.76" y="24" textLength="8.54" lengthAdjust="spacing">]</text><text transform="scale(0.82 1)" x="0.00" y="37" textLength="42.68" lengthAdjust="spacing">-60.9</text></svg>
<div class="a" style="left:841px;top:606px;width:163px;height:39px;background:#fff"></div>
<svg class="a mono" style="left:841px;top:606px" width="163" height="39" font-size="13" fill="#0a7478"><text transform="scale(0.82 1)" x="0.00" y="11" textLength="59.76" lengthAdjust="spacing">MDF-437</text><text transform="scale(0.82 1)" x="0.00" y="24" textLength="42.68" lengthAdjust="spacing">CH6 [</text><circle cx="37.5" cy="16" r="1.1" fill="none" stroke="#0a7478" stroke-width="0.9"/><text transform="scale(0.82 1)" x="46.8" y="24" textLength="10.4" lengthAdjust="spacingAndGlyphs">C</text><text transform="scale(0.82 1)" x="59.76" y="24" textLength="8.54" lengthAdjust="spacing">]</text><text transform="scale(0.82 1)" x="0.00" y="37" textLength="42.68" lengthAdjust="spacing">-21.3</text></svg>
<div class="thin-raised" style="left:8px;top:664px;width:1008px;height:40px;"></div>
<div class="raised" style="left:16px;top:672px;width:81px;height:25px"></div>
<svg class="jp" style="left:24px;top:678px" width="68" height="14" shape-rendering="crispEdges"><title>ｱﾗｰﾑﾘｾｯﾄ</title><path fill="#000" d="M28 0h1v1h-1zM36 0h1v1h-1zM40 0h1v1h-1zM45 0h1v1h-1zM64 0h1v1h-1zM0 1h6v1h-6zM10 1h5v1h-5zM28 1h2v1h-2zM36 1h1v1h-1zM40 1h1v1h-1zM45 1h1v1h-1zM64 1h1v1h-1zM0 2h1v1h-1zM5 2h1v1h-1zM28 2h1v1h-1zM36 2h1v1h-1zM40 2h1v1h-1zM45 2h1v1h-1zM64 2h1v1h-1zM5 3h1v1h-1zM28 3h1v1h-1zM36 3h1v1h-1zM40 3h1v1h-1zM45 3h1v1h-1zM47 3h3v1h-3zM55 3h1v1h-1zM64 3h1v1h-1zM2 4h1v1h-1zM4 4h2v1h-2zM28 4h1v1h-1zM36 4h1v1h-1zM40 4h1v1h-1zM43 4h5v1h-5zM49 4h1v1h-1zM53 4h1v1h-1zM55 4h1v1h-1zM58 4h1v1h-1zM64 4h1v1h-1zM2 5h1v1h-1zM4 5h1v1h-1zM9 5h7v1h-7zM28 5h1v1h-1zM36 5h1v1h-1zM40 5h1v1h-1zM43 5h1v1h-1zM45 5h1v1h-1zM48 5h2v1h-2zM53 5h2v1h-2zM56 5h1v1h-1zM58 5h1v1h-1zM64 5h2v1h-2zM2 6h3v1h-3zM14 6h2v1h-2zM18 6h6v1h-6zM27 6h2v1h-2zM30 6h1v1h-1zM36 6h1v1h-1zM40 6h1v1h-1zM45 6h1v1h-1zM48 6h1v1h-1zM54 6h1v1h-1zM56 6h1v1h-1zM58 6h1v1h-1zM64 6h3v1h-3zM2 7h1v1h-1zM14 7h2v1h-2zM27 7h1v1h-1zM30 7h2v1h-2zM36 7h1v1h-1zM40 7h1v1h-1zM45 7h1v1h-1zM47 7h2v1h-2zM58 7h1v1h-1zM64 7h1v1h-1zM66 7h2v1h-2zM2 8h1v1h-1zM14 8h1v1h-1zM27 8h1v1h-1zM31 8h1v1h-1zM36 8h1v1h-1zM40 8h1v1h-1zM45 8h1v1h-1zM57 8h2v1h-2zM64 8h1v1h-1zM67 8h1v1h-1zM2 9h1v1h-1zM13 9h2v1h-2zM27 9h1v1h-1zM31 9h1v1h-1zM40 9h1v1h-1zM45 9h1v1h-1zM57 9h1v1h-1zM64 9h1v1h-1zM1 10h2v1h-2zM13 10h1v1h-1zM26 10h7v1h-7zM39 10h1v1h-1zM45 10h1v1h-1zM56 10h2v1h-2zM64 10h1v1h-1zM1 11h1v1h-1zM12 11h2v1h-2zM26 11h3v1h-3zM32 11h1v1h-1zM39 11h1v1h-1zM45 11h1v1h-1zM56 11h1v1h-1zM64 11h1v1h-1zM0 12h2v1h-2zM10 12h3v1h-3zM38 12h1v1h-1zM45 12h5v1h-5zM55 12h1v1h-1zM64 12h1v1h-1zM37 13h2v1h-2zM64 13h1v1h-1z"/></svg>
<div class="a" style="left:104px;top:672px;width:903px;height:26px;background:#fff;border-top:1px solid #808080;border-left:1px solid #808080;border-right:1px solid #fff;border-bottom:1px solid #fff;box-shadow:inset 1px 1px 0 #404040, inset -1px -1px 0 #d4d0c8"></div>
<div class="raised" style="left:989px;top:674px;width:16px;height:22px"></div>
<svg class="a" style="left:993px;top:683px" width="7" height="4" shape-rendering="crispEdges"><path d="M0 0h7v1h-1v1h-1v1h-1v1h-1v-1h-1v-1h-1v-1h-1z" fill="#000"/></svg>
<div class="thin-sunk" style="left:0px;top:719px;width:150px;height:19px;"></div>
<div class="thin-sunk" style="left:152px;top:719px;width:872px;height:19px;"></div>
<svg class="jp" style="left:2px;top:722px" width="58" height="11" shape-rendering="crispEdges"><title>保存ウェイト</title><path fill="#000" d="M15 0h1v1h-1zM49 0h1v1h-1zM1 1h1v1h-1zM3 1h6v1h-6zM15 1h1v1h-1zM27 1h1v1h-1zM49 1h1v1h-1zM53 1h1v1h-1zM1 2h1v1h-1zM3 2h1v1h-1zM8 2h1v1h-1zM12 2h10v1h-10zM27 2h1v1h-1zM48 2h1v1h-1zM53 2h1v1h-1zM1 3h1v1h-1zM3 3h1v1h-1zM8 3h1v1h-1zM15 3h1v1h-1zM24 3h8v1h-8zM46 3h2v1h-2zM53 3h1v1h-1zM0 4h2v1h-2zM3 4h6v1h-6zM14 4h1v1h-1zM16 4h5v1h-5zM24 4h1v1h-1zM30 4h1v1h-1zM35 4h6v1h-6zM45 4h3v1h-3zM53 4h2v1h-2zM0 5h2v1h-2zM6 5h1v1h-1zM14 5h1v1h-1zM19 5h1v1h-1zM24 5h1v1h-1zM30 5h1v1h-1zM37 5h1v1h-1zM43 5h2v1h-2zM47 5h1v1h-1zM53 5h1v1h-1zM55 5h2v1h-2zM1 6h9v1h-9zM13 6h2v1h-2zM18 6h1v1h-1zM30 6h1v1h-1zM37 6h1v1h-1zM47 6h1v1h-1zM53 6h1v1h-1zM57 6h1v1h-1zM1 7h1v1h-1zM5 7h3v1h-3zM12 7h1v1h-1zM14 7h8v1h-8zM29 7h1v1h-1zM37 7h1v1h-1zM47 7h1v1h-1zM53 7h1v1h-1zM1 8h1v1h-1zM4 8h1v1h-1zM6 8h1v1h-1zM8 8h1v1h-1zM14 8h1v1h-1zM18 8h1v1h-1zM28 8h2v1h-2zM34 8h8v1h-8zM47 8h1v1h-1zM53 8h1v1h-1zM1 9h3v1h-3zM6 9h1v1h-1zM9 9h1v1h-1zM14 9h1v1h-1zM18 9h1v1h-1zM26 9h2v1h-2zM47 9h1v1h-1zM53 9h1v1h-1zM1 10h1v1h-1zM6 10h1v1h-1zM14 10h1v1h-1zM16 10h3v1h-3z"/></svg>
<svg class="jp" style="left:64px;top:723px" width="1" height="10" shape-rendering="crispEdges"><title>！</title><path fill="#000" d="M0 0h1v1h-1zM0 1h1v1h-1zM0 2h1v1h-1zM0 3h1v1h-1zM0 4h1v1h-1zM0 5h1v1h-1zM0 6h1v1h-1zM0 7h1v1h-1zM0 9h1v1h-1z"/></svg>
<svg class="jp" style="left:76px;top:723px" width="1" height="10" shape-rendering="crispEdges"><title>！</title><path fill="#000" d="M0 0h1v1h-1zM0 1h1v1h-1zM0 2h1v1h-1zM0 3h1v1h-1zM0 4h1v1h-1zM0 5h1v1h-1zM0 6h1v1h-1zM0 7h1v1h-1zM0 9h1v1h-1z"/></svg>
<div class="a" style="left:0;top:739px;width:1024px;height:1px;background:#fff"></div>
<div class="raised" style="left:2px;top:742px;width:62px;height:22px"></div>
<svg class="a" style="left:4px;top:745px" width="16" height="16">
<path d="M1 2 Q4 0 7 2 L6.5 7 Q4 5.5 1 7z" fill="#e8682a"/>
<path d="M8 2.5 Q11 4 15 2 L14 8 Q11 9.5 7.5 8z" fill="#5cb82e"/>
<path d="M0.5 8 Q3.5 6.5 6.5 8.2 L6 14 Q3 12 0 13.5z" fill="#3a6fd8"/>
<path d="M7.3 9 Q11 10.5 14 9 L13.3 15 Q10 16 6.8 14.5z" fill="#f6c61c"/>
</svg>
<svg class="jp" style="left:22px;top:746px" width="39" height="10" shape-rendering="crispEdges"><title>スタート</title><path fill="#000" d="M14 0h2v1h-2zM1 1h7v1h-7zM13 1h7v1h-7zM33 1h2v1h-2zM6 2h2v1h-2zM13 2h2v1h-2zM18 2h2v1h-2zM33 2h2v1h-2zM5 3h2v1h-2zM12 3h3v1h-3zM17 3h2v1h-2zM33 3h2v1h-2zM5 4h2v1h-2zM11 4h5v1h-5zM17 4h2v1h-2zM33 4h3v1h-3zM4 5h3v1h-3zM11 5h2v1h-2zM15 5h3v1h-3zM21 5h11v1h-11zM33 5h5v1h-5zM3 6h2v1h-2zM6 6h2v1h-2zM15 6h3v1h-3zM33 6h2v1h-2zM37 6h2v1h-2zM1 7h3v1h-3zM7 7h2v1h-2zM14 7h3v1h-3zM33 7h2v1h-2zM0 8h3v1h-3zM8 8h2v1h-2zM13 8h3v1h-3zM33 8h2v1h-2zM12 9h2v1h-2zM33 9h2v1h-2z"/></svg>
<div class="thin-raised" style="left:71px;top:744px;width:3px;height:20px;"></div>
<div class="thin-raised" style="left:152px;top:744px;width:3px;height:20px;"></div>
<div class="thin-raised" style="left:866px;top:744px;width:3px;height:20px;"></div>
<svg class="a" style="left:78px;top:744px" width="68" height="20">
<defs>
<radialGradient id="ieg" cx="0.4" cy="0.35" r="0.7"><stop offset="0" stop-color="#8fd0ff"/><stop offset="1" stop-color="#1c6fd0"/></radialGradient>
<linearGradient id="fdg" x1="0" y1="0" x2="0" y2="1"><stop offset="0" stop-color="#fff0a8"/><stop offset="1" stop-color="#c89020"/></linearGradient>
</defs>
<path d="M4.5 17.5 Q2 15 5.5 9.5 Q11 2 18.5 2" stroke="#80c8f8" stroke-width="1.6" fill="none"/>
<path d="M14.6 12.2 A4.4 4.4 0 1 1 14.9 10" stroke="url(#ieg)" stroke-width="2.8" fill="none"/>
<rect x="7" y="9.3" width="8" height="1.8" fill="#2070d0"/>
<path d="M27 5 h4 l1.2 1.5 h7.3 v10.5 h-12.5z" fill="url(#fdg)" stroke="#a07818" stroke-width="1"/>
<circle cx="33" cy="11.3" r="3.4" fill="#e4f6ff" stroke="#90a8b0" stroke-width="0.8"/>
<rect x="49.5" y="3" width="14" height="15" rx="2.5" fill="#2a7ad8"/>
<rect x="51" y="4.5" width="11" height="11" rx="2" fill="#e8f6ff"/>
<path d="M58.5 7 A3.7 3.7 0 1 0 58.5 13" stroke="#2a7ad8" stroke-width="1.6" fill="none"/>
<path d="M54 13 L58 9" stroke="#000" stroke-width="1.3"/>
<rect x="63" y="5" width="2" height="2" fill="#e06030"/>
</svg>
<div class="pressed" style="left:160px;top:742px;width:160px;height:22px"></div>
<svg class="a" style="left:165px;top:745px" width="16" height="16" shape-rendering="crispEdges">
<rect x="0" y="0" width="16" height="16" fill="#262626"/>
<rect x="3" y="1" width="12" height="7" fill="#eef0ee"/>
<rect x="3" y="2" width="5" height="2" fill="#fff"/>
<rect x="8" y="2" width="5" height="1" fill="#a898d8"/>
<rect x="3" y="4" width="5" height="1" fill="#8c8cc8"/>
<rect x="8" y="4" width="5" height="1" fill="#d09088"/>
<rect x="3" y="6" width="5" height="2" fill="#c8d098"/>
<rect x="8" y="6" width="7" height="2" fill="#a8e8a8"/>
<rect x="13" y="3" width="2" height="2" fill="#3a1a50"/>
<rect x="1" y="1" width="1" height="7" fill="#707070"/>
<rect x="1" y="9" width="14" height="1" fill="#d8d8d8"/>
<rect x="2" y="10" width="13" height="5" fill="#fff"/>
<rect x="3" y="11" width="3" height="3" fill="#c81818"/>
<rect x="7" y="11" width="3" height="3" fill="#0808b8"/>
<rect x="11" y="10" width="3" height="4" fill="#18c818"/>
</svg>
<svg class="jp" style="left:185px;top:749px" width="60" height="10" shape-rendering="crispEdges"><title>ソフトサーモ</title><path fill="#000" d="M10 0h9v1h-9zM20 0h2v1h-2zM30 0h2v1h-2zM34 0h2v1h-2zM0 1h2v1h-2zM7 1h2v1h-2zM17 1h2v1h-2zM20 1h2v1h-2zM30 1h2v1h-2zM34 1h2v1h-2zM51 1h8v1h-8zM1 2h2v1h-2zM6 2h2v1h-2zM16 2h2v1h-2zM20 2h2v1h-2zM28 2h11v1h-11zM53 2h2v1h-2zM1 3h2v1h-2zM6 3h2v1h-2zM16 3h2v1h-2zM20 3h3v1h-3zM30 3h2v1h-2zM34 3h2v1h-2zM53 3h2v1h-2zM5 4h3v1h-3zM15 4h3v1h-3zM20 4h5v1h-5zM30 4h2v1h-2zM34 4h2v1h-2zM39 4h21v1h-21zM5 5h2v1h-2zM14 5h3v1h-3zM20 5h2v1h-2zM24 5h2v1h-2zM30 5h2v1h-2zM34 5h2v1h-2zM53 5h2v1h-2zM4 6h2v1h-2zM13 6h3v1h-3zM20 6h2v1h-2zM33 6h3v1h-3zM53 6h2v1h-2zM3 7h2v1h-2zM11 7h3v1h-3zM20 7h2v1h-2zM33 7h2v1h-2zM53 7h2v1h-2zM1 8h3v1h-3zM20 8h2v1h-2zM32 8h2v1h-2zM53 8h6v1h-6zM31 9h2v1h-2z"/></svg>
<svg class="a" style="left:0;top:0" width="1024" height="768"><text x="254" y="758" font-weight="bold" font-size="12">E830</text><text x="988" y="758" font-size="12" textLength="26" lengthAdjust="spacingAndGlyphs">11:49</text></svg>
<svg class="a" style="left:876px;top:746px" width="16" height="17" shape-rendering="crispEdges">
<path d="M5 1v3h1v1h2v-1h1v1h2v-1h1v1h2v-1" stroke="#000" fill="none"/>
<rect x="1" y="6" width="13" height="9" fill="#fff"/>
<rect x="2" y="6" width="12" height="1" fill="#000"/>
<rect x="1" y="7" width="1" height="7" fill="#000"/>
<rect x="2" y="14" width="12" height="1" fill="#000"/>
<path d="M3 9h1M5 9h1M7 9h1M9 9h1M11 9h1M13 9h1M3 11h1M5 11h1M7 11h1M9 11h1M11 11h1M13 11h1" stroke="#000"/>
</svg>
<div class="thin-sunk" style="left:893px;top:742px;width:129px;height:24px;"></div>
<svg class="a" style="left:896px;top:744px" width="90" height="20">
<defs>
<linearGradient id="ysg" x1="0" y1="0" x2="1" y2="1"><stop offset="0" stop-color="#fff890"/><stop offset="1" stop-color="#d8b000"/></linearGradient>
<linearGradient id="rsg" x1="0" y1="0" x2="1" y2="1"><stop offset="0" stop-color="#ff8090"/><stop offset="1" stop-color="#b00818"/></linearGradient>
</defs>
<path d="M2.5 10.5 L5.5 7.5 L6.5 8.5 L4.5 10.5 L6.5 12.5 L5.5 13.5z M6.5 10.5 L9.5 7.5 L10.5 8.5 L8.5 10.5 L10.5 12.5 L9.5 13.5z" fill="#000"/>
<path d="M16 3 Q20 1.5 22.5 1.5 Q25 1.5 29 3 L29 9 Q29 14.5 22.5 17.5 Q16 14.5 16 9z" fill="url(#ysg)" stroke="#807860" stroke-width="1"/>
<rect x="21.8" y="5" width="1.8" height="5.5" fill="#000"/><rect x="21.8" y="11.8" width="1.8" height="1.8" fill="#000"/>
<path d="M34 3 Q38 1.5 40.5 1.5 Q43 1.5 47 3 L47 9 Q47 14.5 40.5 17.5 Q34 14.5 34 9z" fill="url(#rsg)" stroke="#806070" stroke-width="1"/>
<path d="M38 7 L43 12 M43 7 L38 12" stroke="#fff" stroke-width="1.8"/>
<rect x="50.5" y="1.5" width="17" height="16" fill="#0010c8" stroke="#f0f0ff" stroke-width="1"/>
<path d="M55 5 L64 9.5 L55 14z" fill="#fff"/>
<path d="M77 3 L78.6 7.2 L83 7.3 L79.5 10 L80.8 14.3 L77 11.8 L73.2 14.3 L74.5 10 L71 7.3 L75.4 7.2z" fill="#f8e040" stroke="#988020" stroke-width="0.8"/>
<rect x="82" y="14" width="1" height="3" fill="#000"/>
</svg>
<svg class="a" style="left:0;top:0" width="1024" height="768"><text x="254" y="758" font-weight="bold" font-size="12">E830</text><text x="988" y="758" font-size="12" textLength="26" lengthAdjust="spacingAndGlyphs">11:49</text></svg>
</body></html>
